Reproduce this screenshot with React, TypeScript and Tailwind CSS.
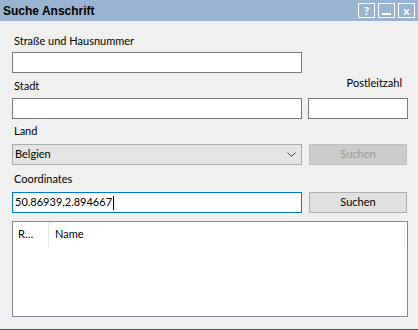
import React from "react";

const font = { fontFamily: "Lato, 'Noto Sans', sans-serif" };

function TitleButton({ children }: { children: React.ReactNode }) {
  return (
    <div className="flex h-[15px] w-[17px] items-center justify-center border border-white text-[12px] font-bold leading-none text-white">
      {children}
    </div>
  );
}

export default function App() {
  return (
    <div className="flex h-[330px] w-[418px] flex-col bg-[#f0f0f0] text-[11px] text-black" style={font}>
      {/* title bar */}
      <div className="flex h-[21px] items-center justify-between bg-[#99b4d1] pl-[3px] pr-[3px]">
        <span className="font-['Liberation_Sans',sans-serif] text-[12px] font-bold">Suche Anschrift</span>
        <div className="flex gap-[3px]">
          <TitleButton>?</TitleButton>
          <TitleButton>
            <span className="mt-[6px] block h-[2px] w-[9px] bg-white" />
          </TitleButton>
          <TitleButton>x</TitleButton>
        </div>
      </div>

      <div className="flex flex-1 flex-col pl-[12px] pt-[12px]">
        <div className="ml-[2px] h-[16px] leading-[16px]">Straße und Hausnummer</div>
        <div className="mt-[3px] h-[21px] w-[290px] border border-[#7a7a7a] bg-white" />

        <div className="flex h-[25px]">
          <div className="ml-[2px] mt-[5px] w-[294px] leading-[16px]">Stadt</div>
          <div className="mt-[2px] w-[94px] text-right leading-[16px]">Postleitzahl</div>
        </div>
        <div className="flex h-[21px] gap-[6px]">
          <div className="w-[290px] border border-[#7a7a7a] bg-white" />
          <div className="w-[100px] border border-[#7a7a7a] bg-white" />
        </div>

        <div className="h-[25px]">
          <div className="ml-[2px] mt-[4px] leading-[16px]">Land</div>
        </div>
        <div className="flex h-[21px] gap-[7px]">
          <div className="flex w-[290px] items-center justify-between border border-[#acacac] bg-[#e5e5e5] pl-[2px] pr-[5px]">
            <span>Belgien</span>
            <svg width="9" height="5" viewBox="0 0 9 5" fill="none">
              <path d="M0.5 0.5 L4.5 4.5 L8.5 0.5" stroke="#404040" strokeWidth="1" />
            </svg>
          </div>
          <div className="flex w-[98px] items-center justify-center border border-[#bfbfbf] bg-[#cccccc] text-[#9a9a9a]">
            Suchen
          </div>
        </div>

        <div className="h-[27px]">
          <div className="ml-[2px] mt-[6px] leading-[16px]">Coordinates</div>
        </div>
        <div className="flex h-[21px] gap-[7px]">
          <div className="flex w-[290px] items-center border border-[#0078d7] bg-white pl-[2px]">
            <span>50.86939,2.894667</span>
            <span className="ml-[1px] h-[14px] w-[1px] bg-black" />
          </div>
          <div className="flex w-[98px] items-center justify-center border border-[#adadad] bg-[#e1e1e1]">
            Suchen
          </div>
        </div>

        <div className="relative mt-[8px] h-[96px] w-[396px] border border-[#828790] bg-white">
          <div className="flex h-[25px] items-center">
            <div className="flex h-full w-[36px] items-center border-r border-[#e5e5e5] pl-[5px]">R…</div>
            <div className="pl-[6px]">Name</div>
          </div>
          <div className="absolute right-[2px] top-[1px] h-[25px] w-[1px] bg-[#e6e6e6]" />
        </div>
      </div>
      <div className="h-[1px] bg-[#555555]" />
    </div>
  );
}
